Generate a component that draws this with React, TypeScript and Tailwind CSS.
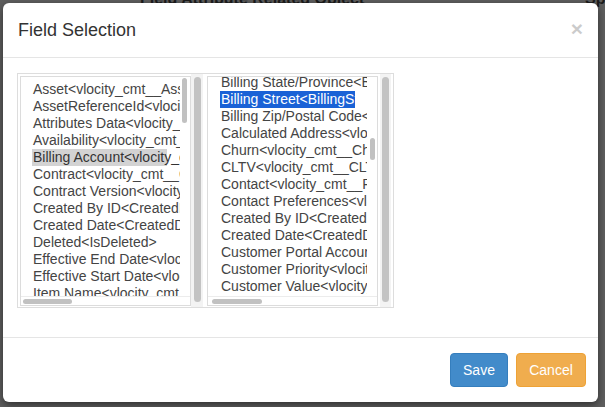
import React from "react";

const leftItems = [
  "Asset<vlocity_cmt__Asset__c>",
  "AssetReferenceId<vlocity_cmt__AssetReferenceId__c>",
  "Attributes Data<vlocity_cmt__AttributesData__c>",
  "Availability<vlocity_cmt__Availability__c>",
  "Billing Account<vlocity_cmt__BillingAccountId__c>",
  "Contract<vlocity_cmt__ContractId__c>",
  "Contract Version<vlocity_cmt__ContractVersionId__c>",
  "Created By ID<CreatedById>",
  "Created Date<CreatedDate>",
  "Deleted<IsDeleted>",
  "Effective End Date<vlocity_cmt__EffectiveEndDate__c>",
  "Effective Start Date<vlocity_cmt__EffectiveStartDate__c>",
  "Item Name<vlocity_cmt__ItemName__c>",
];

const rightItems = [
  "Billing State/Province<BillingState>",
  "Billing Street<BillingStreet>",
  "Billing Zip/Postal Code<BillingPostalCode>",
  "Calculated Address<vlocity_cmt__CalculatedAddress__c>",
  "Churn<vlocity_cmt__ChurnRisk__c>",
  "CLTV<vlocity_cmt__CLTV__c>",
  "Contact<vlocity_cmt__PrimaryContactId__c>",
  "Contact Preferences<vlocity_cmt__ContactPreferences__c>",
  "Created By ID<CreatedById>",
  "Created Date<CreatedDate>",
  "Customer Portal Account<IsCustomerPortal>",
  "Customer Priority<vlocity_cmt__CustomerPriority__c>",
  "Customer Value<vlocity_cmt__CustomerValue__c>",
  "Customer Since<vlocity_cmt__CustomerSinceDate__c>",
];

function Row({ text, sel }: { text: string; sel?: "gray" | "blue" }) {
  if (sel === "blue") {
    return (
      <div className="h-[17px] leading-[17px] w-[135px] overflow-hidden whitespace-nowrap pl-[1px] bg-[#1a62d6] text-white">
        {text}
      </div>
    );
  }
  if (sel === "gray") {
    return (
      <div className="h-[17px] leading-[17px] w-full overflow-hidden whitespace-nowrap pl-[1px] text-[#333333] bg-[linear-gradient(to_right,#d3d3d3_135px,transparent_135px)]">
        {text}
      </div>
    );
  }
  return (
    <div className="h-[17px] leading-[17px] w-full overflow-hidden whitespace-nowrap pl-[1px] text-[#444444]">
      {text}
    </div>
  );
}

function OuterScroll({ w }: { w: string }) {
  return (
    <div className={`${w} self-stretch bg-[#f3f3f3] flex justify-center`}>
      <div className="mt-[3px] w-[7px] h-[225px] rounded-full bg-[#c3c3c3]" />
    </div>
  );
}

export default function App() {
  return (
    <div className="relative w-[605px] h-[407px] overflow-hidden bg-[#5f5f5f] pt-[3px] pl-[3px] font-['Liberation_Sans',Arial,sans-serif]">
      <div className="absolute top-[-13px] left-[140px] text-[16px] font-bold text-[#1c1c1c] whitespace-nowrap">
        Field Attribute Related Object
      </div>
      <div className="absolute top-[-13px] left-[585px] text-[16px] font-bold text-[#1c1c1c] whitespace-nowrap">
        Sp
      </div>
      <div className="relative w-[595px] h-[399px] bg-white rounded-[6px] shadow-[0_3px_9px_rgba(0,0,0,0.5)] flex flex-col overflow-hidden">
        {/* header */}
        <div className="h-[55px] shrink-0 border-b border-[#e5e5e5] flex items-center justify-between pl-[15px] pr-[15px]">
          <div className="text-[18px] leading-[25px] text-[#333333]">Field Selection</div>
          <div className="text-[21px] font-bold leading-none text-black opacity-20 -mt-[3px]">×</div>
        </div>
        {/* body */}
        <div className="h-[279px] shrink-0 pt-[15px] pl-[14px]">
          <div className="w-[377px] h-[235px] border border-[#dddddd] bg-white flex">
            {/* left listbox */}
            <div className="ml-[2px] mt-[2px] w-[171px] h-[230px] border border-[#dcdcdc] bg-white flex flex-col text-[14px]">
              <div className="flex-1 min-h-0 flex">
                <div className="flex-1 overflow-hidden pl-[11px] pt-[4px]">
                  {leftItems.map((t, i) => (
                    <Row key={i} text={t} sel={i === 4 ? "gray" : undefined} />
                  ))}
                </div>
                <div className="w-[10px] pt-[1px]">
                  <div className="ml-[2px] w-[5px] h-[45px] rounded-full bg-[#c1c1c1]" />
                </div>
              </div>
              <div className="h-[9px] shrink-0 border-t border-[#ececec] pt-[2px] pl-[2px]">
                <div className="w-[49px] h-[5px] rounded-full bg-[#c1c1c1]" />
              </div>
            </div>
            <OuterScroll w="w-[12px]" />
            {/* right listbox */}
            <div className="ml-[4px] mt-[2px] w-[171px] h-[230px] border border-[#dcdcdc] bg-white flex flex-col text-[14px]">
              <div className="flex-1 min-h-0 flex">
                <div className="flex-1 overflow-hidden pl-[12px]">
                  <div className="-mt-[3px]">
                    {rightItems.map((t, i) => (
                      <Row key={i} text={t} sel={i === 1 ? "blue" : undefined} />
                    ))}
                  </div>
                </div>
                <div className="w-[10px] pt-[61px]">
                  <div className="ml-[3px] w-[5px] h-[22px] rounded-full bg-[#c1c1c1]" />
                </div>
              </div>
              <div className="h-[9px] shrink-0 border-t border-[#ececec] pt-[2px] pl-[4px]">
                <div className="w-[50px] h-[5px] rounded-full bg-[#c1c1c1]" />
              </div>
            </div>
            <div className="ml-[2px] flex self-stretch">
              <OuterScroll w="w-[11px]" />
            </div>
          </div>
        </div>
        {/* footer */}
        <div className="flex-1 border-t border-[#e5e5e5] pt-[15px] pr-[12px] flex justify-end items-start gap-[8px]">
          <button className="w-[58px] h-[34px] rounded-[4px] border border-[#357ebd] bg-[#428bca] text-white text-[14px]">
            Save
          </button>
          <button className="w-[70px] h-[34px] rounded-[4px] border border-[#eea236] bg-[#f0ad4e] text-white text-[14px]">
            Cancel
          </button>
        </div>
      </div>
    </div>
  );
}
